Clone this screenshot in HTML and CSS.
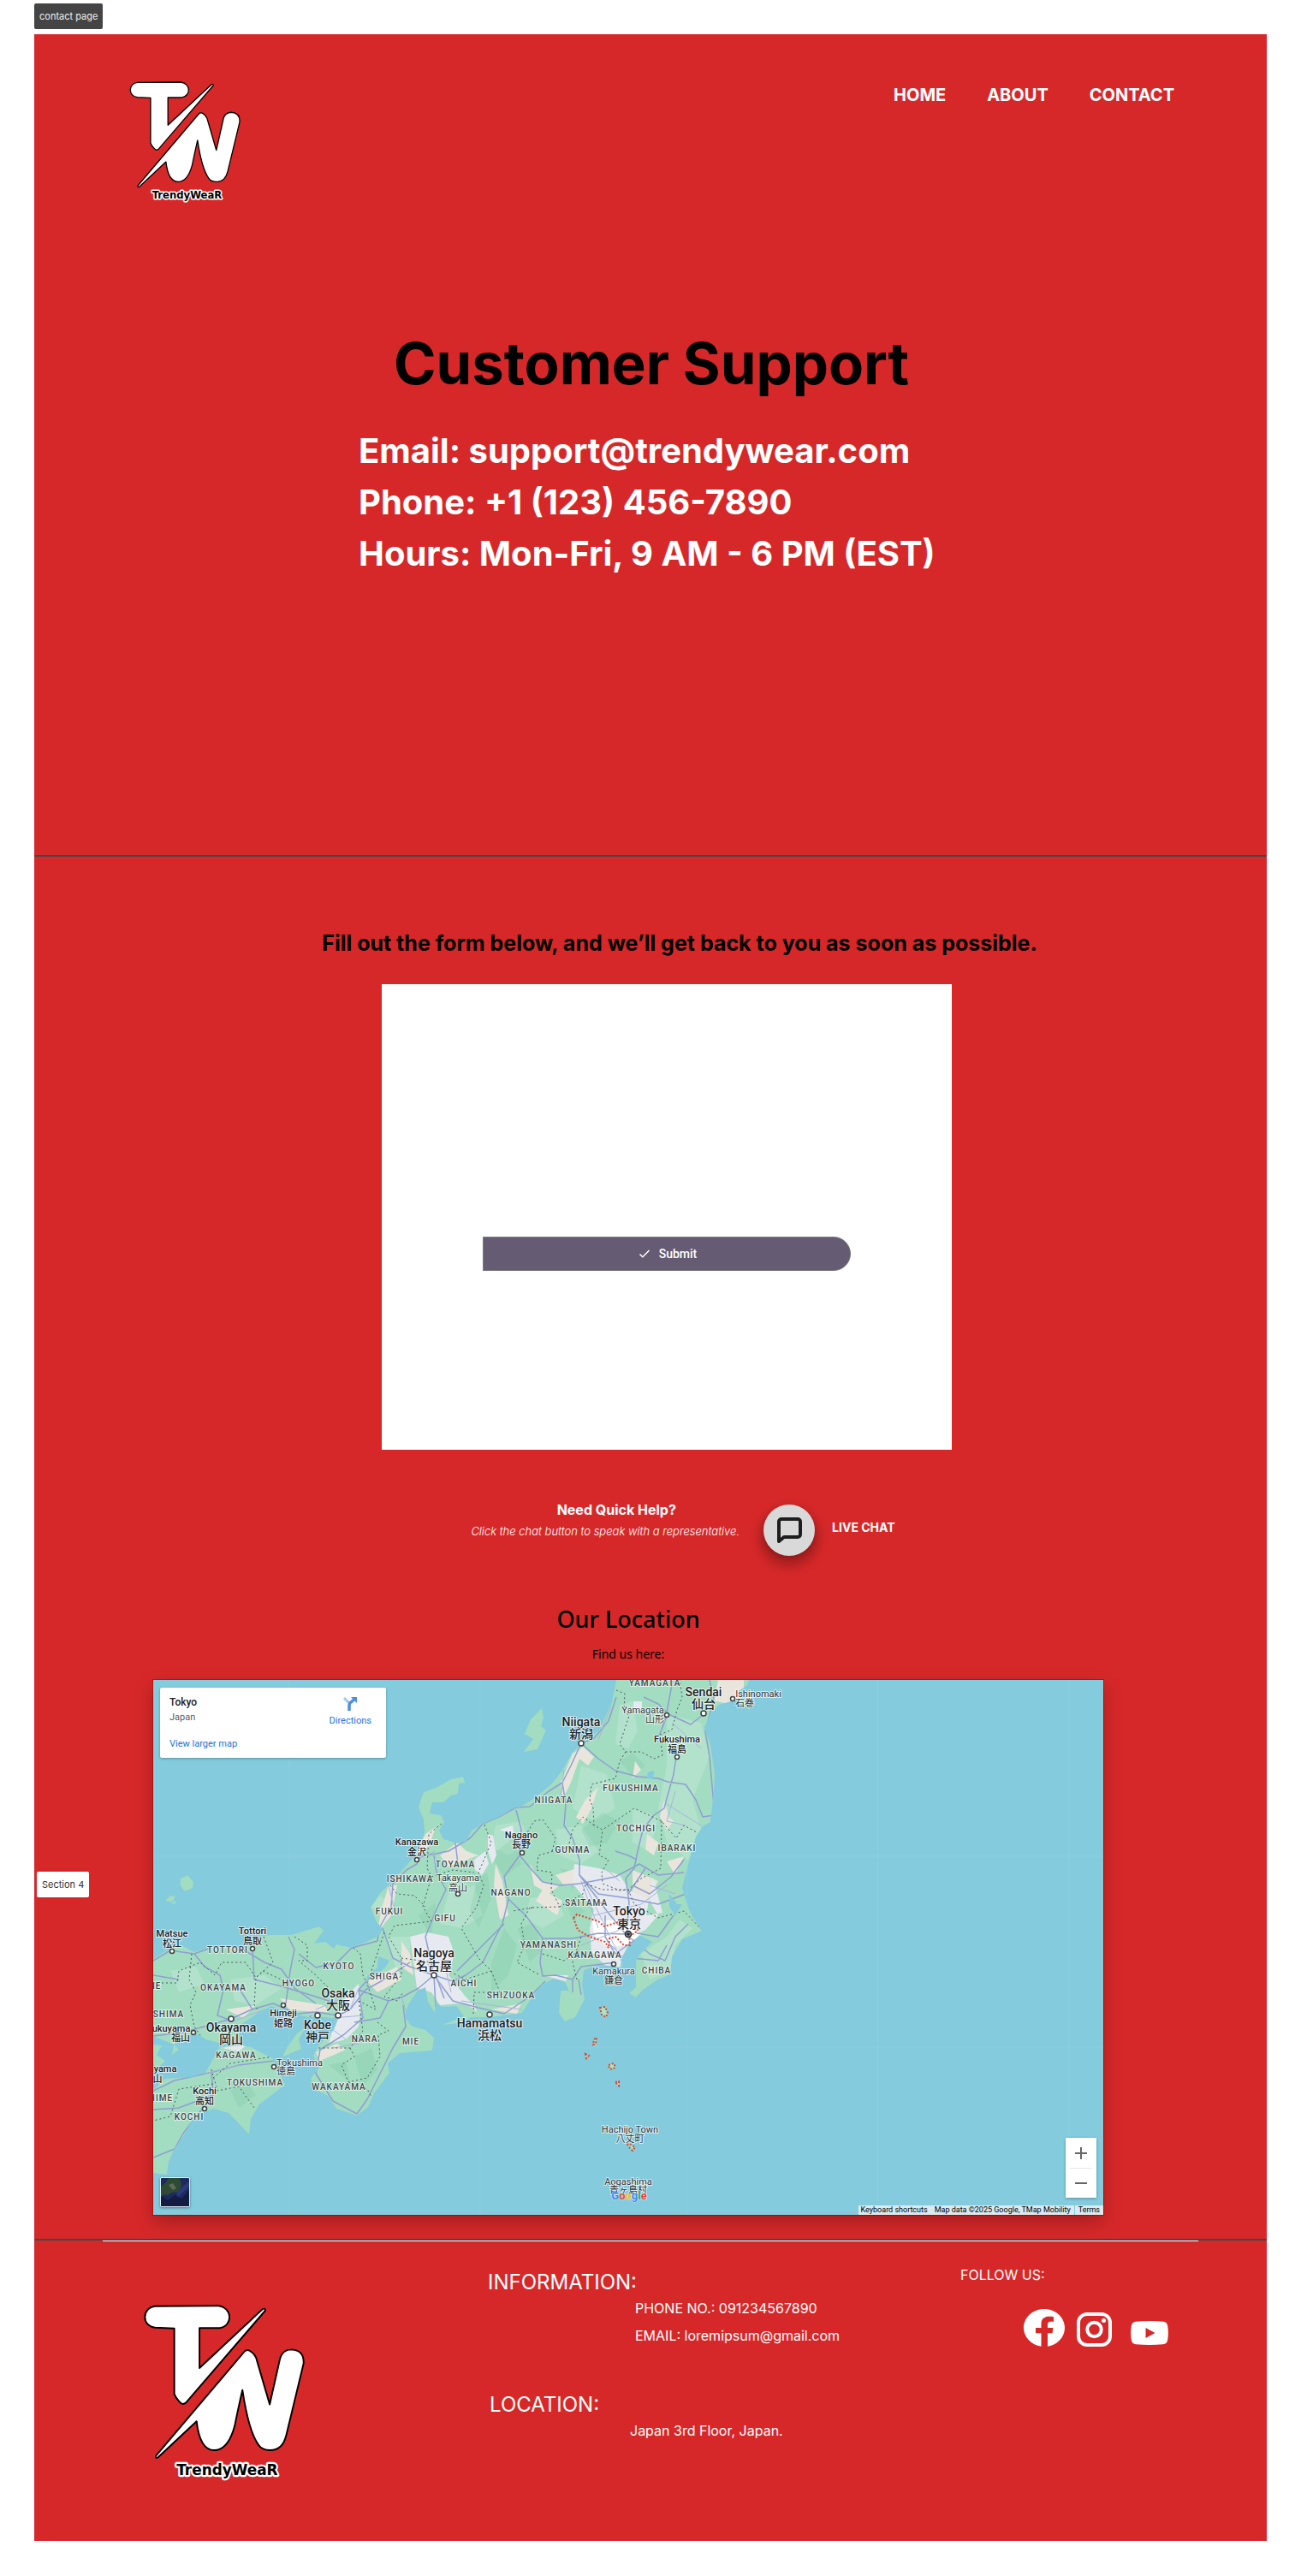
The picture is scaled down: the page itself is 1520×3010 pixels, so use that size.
FILE: index.html
```html
<!DOCTYPE html>
<html lang="en">
<head>
<meta charset="utf-8">
<meta name="viewport" content="width=device-width, initial-scale=1">
<title>TrendyWeaR – Contact</title>
<link rel="stylesheet" href="styles.css">
</head>
<body>
<svg class="defs" aria-hidden="true">
  <symbol id="logo" viewBox="0 0 400 440">
    <g fill="#fff" stroke="#000" stroke-width="4" stroke-linejoin="round">
      <path d="M32 9L184 8C219 12 221 56 188 62H139V159L292 16Q299 13 298 20L106 243Q98 250 90 240Q82 232 78 222V63L32 61C-2 58-1 12 32 9Z"/>
      <path d="M33 372L247 120Q253 112 262 118Q272 124 276 134L309 247L334 136Q340 114 362 114Q393 116 391 148L349 322Q340 358 310 358Q290 358 282 345Q258 312 243 212Q232 260 224 300Q208 358 175 358Q140 358 132 288L40 374Q33 380 33 372Z"/>
    </g>
    <text class="logo-name" x="206" y="418" text-anchor="middle">TrendyWeaR</text>
  </symbol>
</svg>

<div class="tag">contact page</div>

<div class="page">
  <header class="hero">
    <div class="topbar">
      <a href="#" aria-label="TrendyWeaR home"><svg class="logo"><use href="#logo"/></svg></a>
      <nav class="nav">
        <a href="#">HOME</a>
        <a href="#">ABOUT</a>
        <a href="#">CONTACT</a>
      </nav>
    </div>
    <h1 class="hero-title">Customer Support</h1>
    <div class="hero-info">
      <p>Email: support@trendywear.com</p>
      <p>Phone: +1 (123) 456-7890</p>
      <p>Hours: Mon-Fri, 9 AM - 6 PM (EST)</p>
    </div>
  </header>

  <main class="main">
    <span class="section-tag">Section 4</span>
    <h2 class="form-title">Fill out the form below, and we’ll get back to you as soon as possible.</h2>
    <div class="form-wrap">
      <form class="form-card">
        <button class="submit" type="button">
          <svg width="18" height="18" viewBox="0 0 18 18" fill="none" stroke="#fff" stroke-width="1.500"><path d="M3.500 9.500L6.800 12.800L14.500 5"/></svg>
          Submit
        </button>
      </form>
    </div>

    <div class="help">
      <div class="help-text">
        <h3>Need Quick Help?</h3>
        <p>Click the chat button to speak with a representative.</p>
      </div>
      <button class="chat-button" type="button" id="chat" aria-label="Open live chat">
        <svg width="36" height="36" viewBox="0 0 36 36" fill="none" stroke="#1e1e1e" stroke-width="4" stroke-linejoin="round"><path d="M31 23a3 3 0 0 1-3 3H12l-6 5V8a3 3 0 0 1 3-3h19a3 3 0 0 1 3 3z"/></svg>
      </button>
      <label class="chat-label" for="chat">LIVE CHAT</label>
    </div>

    <section class="location">
      <h2>Our Location</h2>
      <p>Find us here:</p>
      <div class="map">
        <svg class="map-art" viewBox="0 0 1110 625" role="img" aria-label="Map of central Japan">
          <defs>
            <clipPath id="land-clip"><use href="#land"/></clipPath>
          </defs>
          <rect width="1110" height="625" fill="#83cbdd"/>
          <path d="M159 0V625M382 0V625M624 0V625M847 0V625M1070 0V625M0 206H1110M0 429H1110" stroke="#8ed0e1" fill="none"/>
          <path id="land" fill="#a2dcc1" d="M541 0L536 26L529 41L521 59L501 73L489 86L478 106L464 123L444 139L428 149L423 149L404 160L385 168L372 176L366 188L356 191L339 186L334 176L340 166L336 158L323 156L326 143L339 143L348 135L356 133L357 121L364 120L362 113L348 116L330 126L316 131L312 142L310 149L316 163L317 179L308 203L294 219L277 238L265 249L254 266L261 283L268 290L264 299L244 308L231 313L214 309L211 314L201 306L188 308L199 293L194 288L178 293L161 298L138 298L128 299L108 313L64 313L48 318L31 309L16 316L0 326V416L24 426L38 416L53 414L61 420L76 424L91 421L104 410L98 406L124 388L138 381L161 389L181 394L201 394L216 396L211 409L194 426L187 439L194 453L184 466L191 479L204 486L214 501L238 509L251 499L258 483L276 459L274 448L288 436L326 433L328 418L318 409L301 404L294 393L298 379L309 363L318 359L321 376L329 389L330 376L337 382L354 381L363 393L338 403L358 401L371 394L394 394L431 389L441 373L454 356L468 349L481 353L486 363L476 363L474 389L481 399L493 394L504 373L501 356L503 339L521 333L538 334L548 336L546 326L554 313L568 298L583 306L568 321L564 329L564 359L556 366L564 371L571 363L588 351L604 344L606 323L618 303L641 293L628 273L624 263L618 243L623 223L634 183L642 171L651 166L655 130L656 109L651 76L644 56L651 39L661 29L681 23L698 36L684 13L694 6L696 0ZM0 479L14 466L44 464L61 459L68 446L78 429L98 426L114 429L141 443L144 453L154 473L141 483L124 496L114 513L112 531L98 516L88 506L71 501L48 509L38 529L24 549L18 563L16 578L0 576ZM178 406L168 413L154 433L150 441L173 431L170 420ZM454 33L441 46L434 63L444 69L433 84L449 81L459 59L453 54L456 44ZM32 232L40 228L47 236L46 243L37 247L32 241ZM14 258L20 252L26 253L22 259ZM20 262L25 258L27 261ZM0 426L10 427L4 438L14 445L6 453L0 450ZM24 426L30 432L22 438Z"/>

          <g clip-path="url(#land-clip)">
            <!-- lighter lowlands and rougher high ground -->
            <path fill="#bde6d3" opacity=".6" d="M600 40L640 50L650 90L630 140L640 175L625 210L600 190L590 150L600 100ZM545 30L560 25L566 60L555 80L540 75ZM500 100L530 110L540 150L515 165L490 150ZM400 170L430 165L440 190L415 205L395 195ZM470 175L500 170L520 200L500 215L475 205ZM345 250L375 240L385 275L360 290L335 285ZM440 255L470 250L480 275L455 290L435 280ZM570 320L600 300L615 280L630 290L610 310L605 340L580 350ZM270 300L300 300L300 330L285 340ZM90 350L130 345L150 360L120 380L95 375ZM560 150L590 160L580 200L560 190ZM255 265L265 252L277 262L272 280ZM20 340L50 335L60 355L30 365Z"/>
            <path fill="#86ccab" opacity=".35" d="M545 95L560 85L575 100L560 112ZM500 175L525 155L545 165L530 190L510 195ZM395 205L420 185L430 215L410 230ZM378 235L390 225L395 255L380 290L370 270ZM395 330L410 290L425 310L415 345L395 365ZM425 290L445 285L455 315L440 330ZM235 440L255 430L262 455L245 475ZM205 450L225 445L230 470ZM310 275L330 260L325 300ZM90 480L110 470L120 485L100 500ZM475 220L500 225L490 245ZM480 255L505 270L490 280Z"/>
            <path fill="#e9e5dd" d="M490 86L502 78L515 90L508 100L498 92L488 120L478 140L476 120ZM660 0H690V18L672 28L655 24ZM563 95L570 105L560 115ZM597 140L602 160L608 165L600 175L592 160ZM520 125L512 150L502 168L494 160L505 140ZM400 215L408 235L415 275L405 280L398 240ZM355 190L366 200L380 205L345 218L335 205ZM318 180L330 172L322 195L306 208ZM275 240L285 240L278 275L270 285L262 295L266 270ZM290 305L300 320L304 345L290 335ZM250 352L285 335L290 350L262 365ZM148 372L200 380L205 388L160 386ZM85 385L120 380L105 395ZM560 222L590 235L575 262L560 258ZM577 180L590 190L585 205L575 198ZM600 212L620 206L610 228ZM470 228L495 220L500 240L480 240ZM447 258L455 245L478 258L472 275ZM440 215L452 235L475 240L462 250L445 240ZM395 385L430 378L425 390ZM362 375L375 378L378 388ZM190 435L215 425L225 432L195 445ZM143 450L156 458L150 462Z"/>
            <path fill="#e6e9ef" d="M492 215L520 220L545 228L556 245L580 258L590 275L575 292L558 300L545 335H530L512 318L510 290L515 268L500 250L490 238ZM225 370L240 355L243 380L240 405L225 420L205 425L212 400L214 392ZM300 300L320 295L345 300L352 320L345 345L365 370L375 380L355 378L335 380L325 365L308 360ZM375 210L388 200L392 215L384 228L376 222ZM391 180L397 182L401 205L396 215L391 200ZM405 175L420 170L422 182ZM455 345L485 345L482 352ZM584 230L576 275L595 272ZM80 430L110 426L100 434ZM561 25H571V35H561Z"/>
            <path fill="#fff" d="M513 282L545 280L570 298L555 310L530 312L515 298Z"/>

            <!-- roads and railways -->
            <g fill="none" stroke="#8f9fd0" stroke-width="1.500" stroke-linejoin="round">
              <path d="M541 20L532 48L515 68L500 74L520 92L540 106L566 113L590 115L601 119L622 122L634 140L642 160L656 158L650 90L645 60L655 22L650 0M607 0L600 38L595 55M611 90L608 110L601 135L597 150L585 158L572 175L566 200L562 220L552 232L556 260L553 297M500 74L488 100L478 120L462 130L440 148L424 149L404 160L385 168L370 185L345 200L330 203L312 206L308 215L296 222L280 238L278 265L264 290L262 305L232 313L215 330L190 336L170 320M478 120L482 145L480 170L490 185L498 210L498 228L515 250L530 270L552 297M424 152L430 175L428 205L445 225L455 236L475 240L498 238L540 230L568 215L590 228L620 225M428 205L410 230L415 256L435 275L455 302L452 330L455 346L470 345L490 350L500 335L540 330M455 302L490 302L520 296L552 297L580 320L598 328L610 300L625 285M415 256L408 285L400 300L385 330L365 345L350 352L328 345L318 300L330 270L342 245L331 225L328 205M0 328L20 316L48 320L75 310L100 312L130 330L150 338L165 360L190 378M48 320L60 335L78 345L82 362L75 392L91 398M268 290L275 310L280 325L300 335L328 345M0 416L35 412L91 396L115 385L140 378L168 390L190 388L216 392L230 385L248 362L270 350L300 330M240 362L275 375L292 370L310 360L328 345L350 375L380 383L410 390L440 370L458 352M240 362L245 395L222 415L195 432L190 460L210 492L238 507L250 490L265 460L280 430L295 405L292 380M0 480L25 468L70 458L100 450L141 445L165 410L185 392M68 458L70 485L60 498L50 510L35 530L25 548L0 558M70 485L30 500L0 502"/>
              <path d="M573 20L590 28L602 40L628 52L643 40M601 40L590 68M498 228L520 250L555 255L590 262L622 250M560 240L580 250L605 230L620 210M490 350L490 365M497 350L500 368M528 275L528 300L540 320L568 300M565 296L590 300L608 275M560 325L590 328L600 310M158 300L165 315L160 340L155 378M116 314L118 350L150 358L190 370L220 380M0 345L30 350M116 385L100 360M165 410L150 440M216 392L190 420M240 362L260 340M275 375L265 395L235 400M328 345L330 382L335 388M330 345L340 372M353 190L356 215M410 285L375 320L355 340M540 200L555 205L565 210M555 250L575 220"/>
            </g>
            <g fill="none" stroke="#a7b4db" stroke-width="1">
              <path d="M535 30L520 70M606 50L640 80M600 145L640 170M610 130L600 165L622 170M480 105L476 140M500 235L520 290M505 240L548 330M515 275L570 262L600 240M530 305L555 330M550 290L500 310M308 210L330 200M275 240L282 270M90 400L130 385M210 430L240 425M230 385L240 360M320 330L338 360M340 330L348 365M360 375L430 385M300 400L290 370M580 240L610 250M545 235L530 222M210 395L245 392M205 405L225 420M190 385L220 372M100 450L60 460M650 170L640 190"/>
            </g>

            <!-- prefecture borders -->
            <g fill="none" stroke="#4c5a5e" stroke-width="1" stroke-dasharray="2 3">
              <path d="M541 12L551 16L550 35L556 42L545 75L552 84L570 84L585 92L595 88L592 64L606 58L612 35L618 20L615 0M552 84L545 95L540 115L512 122L510 140L514 150L515 170L525 175L562 150L594 165L611 185L620 170L635 178M594 165L593 220L570 232L555 245L545 246L525 238L524 225L532 210L521 205L525 175M515 170L502 160L490 175L485 195L450 205L448 222L466 225L465 245L475 265L502 250L505 238L525 245L555 245L562 262L590 278L620 270L641 292M466 200L470 185L455 163L445 165L436 180L430 195M475 265L440 266L430 285L434 310L425 330L452 345M387 169L395 190L380 225L386 240L378 265L360 290L380 325L395 340L365 350L335 335M337 168L322 180L320 220L325 230L315 265L325 282L282 287L275 300L290 325L290 345L270 370L285 375L292 365M277 240L285 250L305 252L318 265M325 230L350 222L375 225M270 295L250 355L260 385L240 375M290 325L328 330M395 340L405 365L375 365L374 390M443 266L420 270M0 354L28 354L30 340L55 330L72 345L80 330L108 330L120 348L128 340L160 355M129 300L140 330L120 348L118 380L122 385M165 300L180 310L180 328L170 328L190 345L205 360M230 310L242 320L245 345L250 355M45 320L42 350L50 365L43 380L48 405L55 415M240 375L245 410L230 430L190 430M230 430L235 440L220 450L228 470L250 465L265 440L263 415L275 410L262 400M228 470L250 478L255 487M68 455L75 480L100 475L118 500M70 465L90 448L140 440M70 472L30 478L20 510L0 515M495 350L490 330L500 300M455 320L480 328L500 315"/>
            </g>
          </g>

          <path fill="#83cbdd" d="M263 323L276 328L271 336L260 345L252 347L248 363L250 346L262 336ZM578 108L585 106L584 116L577 115ZM603 250L612 262L618 262L610 275L603 265Z"/>
          <g fill="none" stroke="#e0432f" stroke-width="2" stroke-dasharray="2 2">
            <path d="M491 278L495 274L520 282L527 288L553 280M491 278L496 292L510 300L528 306L532 313L533 302L540 300L550 310L557 310L556 300L566 293L568 284"/>
            <path fill="#a9e5c3" d="M522 383L528 382L531 389L529 394L524 391ZM515 420L518 418L517 425L514 426ZM505 437L509 439L506 442ZM532 450L538 448L540 452L537 455L533 454ZM540 470L544 469L544 474ZM553 541L560 544L563 546L560 550L557 547Z"/>
          </g>

          <g class="prefecture">
            <text x="586" y="7">YAMAGATA</text><text x="468" y="144">NIIGATA</text><text x="558" y="130">FUKUSHIMA</text><text x="564" y="177">TOCHIGI</text><text x="490" y="202">GUNMA</text><text x="612" y="200">IBARAKI</text><text x="506" y="264">SAITAMA</text><text x="462" y="313">YAMANASHI</text><text x="353" y="219">TOYAMA</text><text x="300" y="236">ISHIKAWA</text><text x="418" y="252">NAGANO</text><text x="341" y="282">GIFU</text><text x="276" y="274">FUKUI</text><text x="87" y="319">TOTTORI</text><text x="217" y="338">KYOTO</text><text x="270" y="350">SHIGA</text><text x="170" y="358">HYOGO</text><text x="82" y="363">OKAYAMA</text><text x="363" y="358">AICHI</text><text x="418" y="372">SHIZUOKA</text><text x="247" y="423">NARA</text><text x="301" y="426">MIE</text><text x="97" y="442">KAGAWA</text><text x="119" y="474">TOKUSHIMA</text><text x="217" y="479">WAKAYAMA</text><text x="42" y="514">KOCHI</text><text x="516" y="325">KANAGAWA</text><text x="588" y="343">CHIBA</text>
            <text x="18" y="394">SHIMA</text><text x="2" y="361">NE</text><text x="9" y="492">HIME</text>
          </g>
          <g class="town">
            <text x="356" y="235">Takayama</text><text x="356" y="247">高山</text>
            <text x="538" y="344">Kamakura</text><text x="538" y="355">鎌倉</text>
            <text x="557" y="529">Hachijo Town</text><text x="557" y="540">八丈町</text>
            <text x="555" y="590">Aogashima</text><text x="555" y="600">青ヶ島村</text>
            <text x="572" y="39">Yamagata</text><text x="586" y="50">山形</text>
            <text x="707" y="20">Ishinomaki</text><text x="691" y="31">石巻</text>
            <text x="171" y="451">Tokushima</text><text x="155" y="461">徳島</text>
          </g>
          <g class="city">
            <text x="308" y="193">Kanazawa</text><text x="308" y="205">金沢</text>
            <text x="430" y="185">Nagano</text><text x="430" y="196">長野</text>
            <text x="22" y="300">Matsue</text><text x="22" y="312">松江</text>
            <text x="116" y="297">Tottori</text><text x="116" y="309">鳥取</text>
            <text x="152" y="393">Himeji</text><text x="152" y="405">姫路</text>
            <text x="60" y="484">Kochi</text><text x="60" y="496">高知</text>
            <text x="612" y="73">Fukushima</text><text x="612" y="85">福島</text>
            <text x="21" y="411">ukuyama</text><text x="32" y="422">福山</text>
            <text x="14" y="458">yama</text><text x="5" y="470">山</text>
          </g>
          <g class="city city-large">
            <text x="500" y="54">Niigata</text><text x="500" y="68">新潟</text>
            <text x="643" y="19">Sendai</text><text x="643" y="33">仙台</text>
            <text x="328" y="324">Nagoya</text><text x="328" y="339">名古屋</text>
            <text x="216" y="371">Osaka</text><text x="216" y="385">大阪</text>
            <text x="192" y="408">Kobe</text><text x="192" y="422">神戸</text>
            <text x="91" y="411">Okayama</text><text x="91" y="425">岡山</text>
            <text x="393" y="406">Hamamatsu</text><text x="393" y="420">浜松</text>
            <text x="556" y="275">Tokyo</text><text x="556" y="290">東京</text>
          </g>
          <g fill="#fff" stroke="#3c4043" stroke-width="1.500">
            <circle cx="500" cy="74" r="3"/><circle cx="308" cy="210" r="2.500"/><circle cx="431" cy="202" r="2.500"/><circle cx="356" cy="250" r="2.500"/><circle cx="22" cy="317" r="2.500"/><circle cx="116" cy="314" r="2.500"/><circle cx="328" cy="345" r="3"/><circle cx="216" cy="392" r="3"/><circle cx="192" cy="392" r="3"/><circle cx="152" cy="380" r="2.500"/><circle cx="91" cy="396" r="3"/><circle cx="47" cy="412" r="2.500"/><circle cx="141" cy="452" r="2.500"/><circle cx="60" cy="501" r="2.500"/><circle cx="393" cy="391" r="3"/><circle cx="538" cy="332" r="2.500"/><circle cx="643" cy="39" r="3"/><circle cx="677" cy="22" r="2.500"/><circle cx="600" cy="41" r="2.500"/><circle cx="612" cy="90" r="2.500"/>
          </g>
          <circle cx="555" cy="297" r="3.500" fill="#9aa0a6" stroke="#202124" stroke-width="1.500"/>
          <circle cx="555" cy="297" r="1.800" fill="#202124"/>
          <text class="google" x="556" y="607"><tspan fill="#4285f4">G</tspan><tspan fill="#ea4335">o</tspan><tspan fill="#fbbc05">o</tspan><tspan fill="#4285f4">g</tspan><tspan fill="#34a853">l</tspan><tspan fill="#ea4335">e</tspan></text>
        </svg>

        <div class="place">
          <div class="place-main">
            <strong>Tokyo</strong>
            <span>Japan</span>
            <a href="#">View larger map</a>
          </div>
          <a class="directions" href="#">
            <svg width="18" height="18" viewBox="0 0 18 18"><path d="M2 2L8 8" stroke="#a3c6ef" stroke-width="3"/><path d="M8 17V11Q8 8 10 7L14 3.500" fill="none" stroke="#4a90e2" stroke-width="3.500"/><path d="M10 1H17V8Z" fill="#4a90e2"/></svg>
            Directions
          </a>
        </div>

        <button class="satellite" type="button" aria-label="Show satellite imagery">
          <svg viewBox="0 0 33 33"><rect width="33" height="33" fill="#1d2a5e"/><path d="M0 33V20L8 26L16 20L24 24L33 14V33Z" fill="#131b42"/><path d="M18 16L33 4V10L20 22Z" fill="#2a3a78"/><path d="M9 0H22L24 9L20 16L12 17L8 20L3 19L0 22V10L5 6Z" fill="#2f4a32"/><path d="M9 8L14 6L18 12L14 14Z" fill="#5d6d55"/></svg>
        </button>

        <div class="zoom">
          <button type="button" aria-label="Zoom in"><svg width="14" height="14" viewBox="0 0 14 14"><path d="M0 7H14M7 0V14" stroke="#666" stroke-width="2"/></svg></button>
          <button type="button" aria-label="Zoom out"><svg width="14" height="14" viewBox="0 0 14 14"><path d="M0 7H14" stroke="#666" stroke-width="2"/></svg></button>
        </div>

        <div class="credits">
          <a href="#">Keyboard shortcuts</a>
          <span>Map data ©2025 Google, TMap Mobility</span>
          <a class="terms" href="#">Terms</a>
        </div>
      </div>
    </section>
  </main>

  <footer class="footer">
    <div class="footer-brand"><svg class="logo logo-large" role="img" aria-label="TrendyWeaR"><use href="#logo"/></svg></div>
    <div class="footer-info">
      <h2>INFORMATION:</h2>
      <p>PHONE NO.: 091234567890</p>
      <p>EMAIL: loremipsum@gmail.com</p>
      <h2 class="footer-location">LOCATION:</h2>
      <p class="footer-address">Japan 3rd Floor, Japan.</p>
    </div>
    <div class="footer-social">
      <p>FOLLOW US:</p>
      <div class="social">
        <a href="#" aria-label="Facebook"><svg width="48" height="44" viewBox="0 0 48 44"><path fill="#fff" d="M24 0C37.300 0 48 9.800 48 22C48 33 39.300 42.100 28 43.700V28.200H33.500L34.500 22H28V18.500C28 15.500 29.500 14.800 32 14.800H35V9.200C29 8.300 20.500 8.300 20.500 17.500V22H14V28.200H20.500V43.700C9 42 0 33 0 22C0 9.800 10.700 0 24 0Z"/></svg></a>
        <a href="#" aria-label="Instagram"><svg width="41" height="40" viewBox="0 0 41 40" fill="none" stroke="#fff" stroke-width="4"><rect x="2" y="2" width="37" height="36" rx="10"/><circle cx="20.500" cy="20" r="8.200"/><circle cx="31.500" cy="9.500" r="2.500" fill="#fff" stroke="none"/></svg></a>
        <a class="youtube" href="#" aria-label="YouTube"><svg width="44" height="28" viewBox="0 0 44 28"><path fill="#fff" fill-rule="evenodd" d="M6 .8Q22-.7 38 .8Q42.500 1.300 43.200 6Q44.500 14 43.200 22Q42.500 26.700 38 27.200Q22 28.700 6 27.200Q1.500 26.700 .8 22Q-.5 14 .8 6Q1.500 1.300 6 .8ZM17.500 8V20L28.500 14Z"/></svg></a>
      </div>
    </div>
  </footer>
</div>
</body>
</html>
```
FILE: styles.css
```css
* { box-sizing: border-box; }
body { margin: 0; padding: 4px 40px 40px; background: #fff; color: #000; font-family: Inter, "Liberation Sans", sans-serif; }
h1, h2, h3, p { margin: 0; }
a { color: inherit; text-decoration: none; }
button { border: 0; padding: 0; font: inherit; cursor: pointer; }
svg { display: block; }
.defs { position: absolute; width: 0; height: 0; }

.tag { width: max-content; margin-bottom: 6px; padding: 0 6px; border-radius: 2px; background: #444; color: #eee; font-size: 11px; line-height: 30px; }

.page { background: #d72829; }

.logo { width: 133px; height: 147px; }
.logo-large { width: 193px; height: 213px; }
.logo-name { font: 700 35px "DejaVu Sans", sans-serif; fill: #000; stroke: #fff; stroke-width: 9px; stroke-linejoin: round; paint-order: stroke; }

.hero { padding: 53px 108px 322px 110px; }
.topbar { display: flex; justify-content: space-between; align-items: flex-start; }
.nav { display: flex; gap: 48px; padding-top: 3px; color: #fff; font-size: 20px; font-weight: 700; line-height: 30px; }
.hero-title { margin-top: 137px; text-align: center; font-size: 67px; line-height: 96px; font-weight: 700; }
.hero-info { max-width: 684px; margin: 24px auto 0; color: #fff; font-size: 40px; font-weight: 700; line-height: 60px; }

.main { position: relative; padding: 83px 0 28px; border-top: 2px solid #464646; }
.section-tag { position: absolute; left: 3px; top: 1186px; padding: 0 6px; border-radius: 2px; background: #fff; color: #333; font-size: 11px; line-height: 30px; }
.form-title { padding-left: 68px; text-align: center; font-size: 25px; line-height: 36px; font-weight: 700; }
.form-wrap { padding: 30px 0 0 38px; }
.form-card { display: flex; justify-content: center; max-width: 666px; margin: 0 auto; padding: 295px 0 209px; background: #fff; }
.submit { display: flex; justify-content: center; align-items: center; gap: 8px; width: 430px; height: 40px; border: 1px solid #777; border-radius: 0 20px 20px 0; background: #655b72; color: #fff; font: 500 14px/20px Roboto, sans-serif; }

.help { display: flex; justify-content: center; padding: 58px 0 0 76px; color: #fff; }
.help-text { text-align: center; }
.help-text h3 { padding-left: 26px; font-size: 16px; line-height: 24px; }
.help-text p { font-size: 13px; line-height: 26px; font-style: italic; font-weight: 300; }
.chat-button { display: flex; justify-content: center; align-items: center; width: 60px; height: 60px; margin: 6px 20px 0 28px; border-radius: 50%; background: #d9d9d9; box-shadow: 0 8px 12px 6px rgba(0, 0, 0, .2), 0 4px 4px rgba(0, 0, 0, .15); }
.chat-label { align-self: center; font-size: 14px; font-weight: 700; line-height: 24px; }

.location { padding: 54px 191px 0 139px; text-align: center; }
.location h2 { font: 500 27px/40px "Noto Sans", sans-serif; }
.location p { margin: 10px 0 19px; font: 400 14px/22px "Noto Sans", sans-serif; }

.map { position: relative; font-family: Roboto, "Noto Sans CJK JP", sans-serif; text-align: left; box-shadow: 0 8px 20px rgba(0, 0, 0, .25), 0 0 0 1px #c8100f; }
.map-art { width: 100%; height: auto; }
.map-art text { text-anchor: middle; paint-order: stroke; stroke: rgba(255, 255, 255, .7); stroke-width: 2px; stroke-linejoin: round; }
.prefecture { font-size: 10px; font-weight: 500; fill: #3c4449; letter-spacing: 1px; }
.town { font-size: 11px; fill: #2f3438; }
.city { font-size: 11px; font-weight: 500; fill: #202124; }
.city-large { font-size: 14px; }
.map-art .google { font-size: 13px; font-weight: 700; stroke-width: 1px; }

.place { position: absolute; left: 8px; top: 9px; display: flex; justify-content: space-between; width: 264px; padding: 10px 17px 8px 11px; border-radius: 2px; background: #fff; box-shadow: 0 1px 3px rgba(0, 0, 0, .3); font-size: 11px; color: #1a73e8; }
.place-main { display: flex; flex-direction: column; line-height: 16px; }
.place-main strong { color: #202124; font-size: 12px; font-weight: 500; line-height: 14px; }
.place-main span { margin: 3px 0 15px; color: #5b5b5b; }
.directions { display: flex; flex-direction: column; align-items: center; gap: 4px; line-height: 14px; }

.satellite { position: absolute; left: 8px; bottom: 9px; width: 35px; height: 35px; border: 1px solid #e3edf5; border-radius: 2px; box-shadow: 0 1px 3px rgba(0, 0, 0, .4); overflow: hidden; }

.zoom { position: absolute; right: 8px; bottom: 20px; display: flex; flex-direction: column; width: 36px; padding: 0 5px; background: #fff; box-shadow: 0 1px 3px rgba(0, 0, 0, .3); }
.zoom button { display: flex; justify-content: center; align-items: center; height: 35px; background: none; }
.zoom button + button { border-top: 1px solid #e6e6e6; }

.credits { position: absolute; right: 0; bottom: 0; display: flex; padding-left: 3px; background: rgba(245, 245, 245, .75); color: #000; font-size: 9px; line-height: 11px; }
.credits span { margin: 0 4px 0 8px; }
.terms { padding: 0 4px; border-left: 1px solid #83cbdd; }

.footer { position: relative; display: grid; grid-template-columns: 530fr 552fr 358fr; padding-bottom: 66px; border-top: 2px solid #464646; color: #fff; }
.footer::before { content: ""; position: absolute; left: 80px; right: 80px; top: 0; height: 1px; background: #fff; }
.footer-brand { padding: 72px 0 0 126px; }
.footer-info { padding-top: 35px; font-size: 16px; }
.footer-info h2 { font-size: 24px; font-weight: 400; line-height: 28px; }
.footer-info p { padding-left: 172px; line-height: 32px; }
.footer-info p + h2 { margin-top: 51px; }
.footer-info .footer-location { padding-left: 2px; }
.footer-info .footer-address { padding-left: 166px; }
.footer-social { padding-top: 28px; font-size: 16px; line-height: 24px; }
.social { display: flex; align-items: flex-end; gap: 14px; padding: 28px 0 0 74px; }
.youtube { margin: 0 0 2px 8px; }
```
